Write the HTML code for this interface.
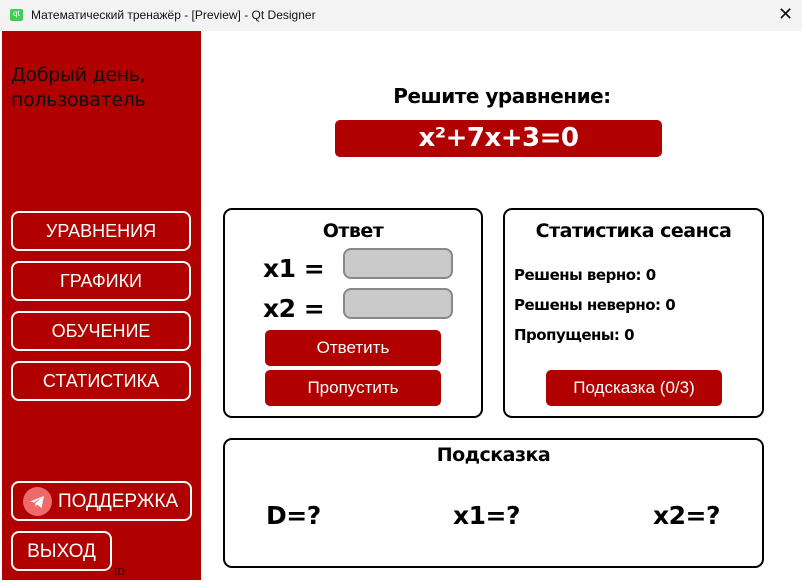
<!DOCTYPE html>
<html><head><meta charset="utf-8"><style>
*{margin:0;padding:0;box-sizing:border-box}
body{width:802px;height:582px;overflow:hidden;background:#fff;font-family:"Liberation Sans","DejaVu Sans",sans-serif;position:relative}
.a{position:absolute}
.title{left:0;top:0;width:802px;height:31px;background:#f3f3f3;font-size:12px;color:#111}
.side{left:2px;top:31px;width:199px;height:549px;background:#b00000}
.nb{position:absolute;border:2px solid #fff;border-radius:8px;color:#fff;font-size:18px;text-align:center;background:#b00000}
.box{position:absolute;border:2px solid #000;border-radius:9px;background:rgba(255,255,255,.6)}
.rb{position:absolute;background:#b00000;color:#fff;border-radius:5px;text-align:center;font-size:17px}
.inp{position:absolute;background:#cacaca;border:2px solid #888;border-radius:8px}
.b{font-weight:bold;font-family:"DejaVu Sans",sans-serif;letter-spacing:-0.5px}
</style></head><body>
<div class="a title">
<div class="a" style="left:10px;top:9px;width:13px;height:12px;background:#41cd52;border-radius:2px;color:#fff;font-size:8px;line-height:10px;text-align:center">qt</div>
<div class="a" style="left:31px;top:8px">Математический тренажёр - [Preview] - Qt Designer</div>
<div class="a" style="left:778px;top:4px;font-size:18px">✕</div>
</div>
<div class="a side">
<div class="a" style="left:9px;top:32px;font-size:19px;line-height:25px;color:#111;font-family:'DejaVu Sans',sans-serif;letter-spacing:-0.3px">Добрый день,<br>пользователь</div>
<div class="nb" style="left:9px;top:180px;width:180px;height:40px;line-height:36px">УРАВНЕНИЯ</div>
<div class="nb" style="left:9px;top:230px;width:180px;height:40px;line-height:36px">ГРАФИКИ</div>
<div class="nb" style="left:9px;top:280px;width:180px;height:40px;line-height:36px">ОБУЧЕНИЕ</div>
<div class="nb" style="left:9px;top:330px;width:180px;height:40px;line-height:36px">СТАТИСТИКА</div>
<div class="nb" style="left:9px;top:450px;width:181px;height:40px;line-height:38px;text-align:left;padding-left:45px;font-size:19px">ПОДДЕРЖКА</div>
<div class="a" style="left:21px;top:456px;width:29px;height:29px;border-radius:50%;background:#ee6a6a"><svg width="29" height="29" viewBox="0 0 29 29"><path d="M7 14.5L21 9L18.5 21L14 17.5L12 20L12.5 16L19 10.5L11 15.5Z" fill="#fff"/></svg></div>
<div class="nb" style="left:9px;top:500px;width:101px;height:40px;line-height:38px;font-size:19px">ВЫХОД</div>
<div class="a" style="left:112px;top:536px;font-size:10px;font-family:'Liberation Serif',serif;color:#000">ID:</div>
</div>
<div class="a b" style="left:202px;top:84px;width:600px;text-align:center;font-size:20px">Решите уравнение:</div>
<div class="rb b" style="left:335px;top:120px;width:327px;height:37px;line-height:37px;font-size:26px">x²+7x+3=0</div>
<div class="box" style="left:223px;top:208px;width:260px;height:210px">
<div class="a b" style="left:0;top:10px;width:256px;text-align:center;font-size:19px">Ответ</div>
<div class="a b" style="left:38px;top:44px;font-size:25px">x1 =</div>
<div class="a b" style="left:38px;top:84px;font-size:25px">x2 =</div>
<div class="inp" style="left:118px;top:38px;width:110px;height:31px"></div>
<div class="inp" style="left:118px;top:78px;width:110px;height:31px"></div>
<div class="rb" style="left:40px;top:120px;width:176px;height:36px;line-height:36px">Ответить</div>
<div class="rb" style="left:40px;top:160px;width:176px;height:36px;line-height:36px">Пропустить</div>
</div>
<div class="box" style="left:503px;top:208px;width:261px;height:210px">
<div class="a b" style="left:0;top:10px;width:257px;text-align:center;font-size:19px">Статистика сеанса</div>
<div class="a b" style="left:9px;top:56px;font-size:15px">Решены верно: 0</div>
<div class="a b" style="left:9px;top:86px;font-size:15px">Решены неверно: 0</div>
<div class="a b" style="left:9px;top:116px;font-size:15px">Пропущены: 0</div>
<div class="rb" style="left:41px;top:160px;width:176px;height:36px;line-height:36px">Подсказка (0/3)</div>
</div>
<div class="box" style="left:223px;top:438px;width:541px;height:130px">
<div class="a b" style="left:0;top:4px;width:537px;text-align:center;font-size:19px">Подсказка</div>
<div class="a b" style="left:41px;top:61px;font-size:25px">D=?</div>
<div class="a b" style="left:228px;top:61px;font-size:25px">x1=?</div>
<div class="a b" style="left:428px;top:61px;font-size:25px">x2=?</div>
</div>
</body></html>
